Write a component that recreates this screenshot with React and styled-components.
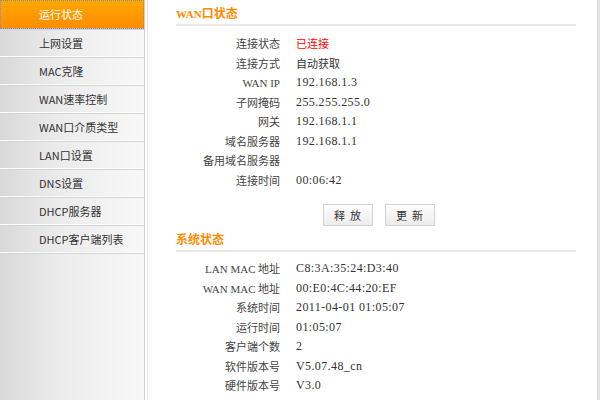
import React from 'react'
import styled, { createGlobalStyle } from 'styled-components'

const GlobalStyle = createGlobalStyle`
  html, body {
    margin: 0;
    padding: 0;
    background: #fff;
  }
  body {
    font-family: "Liberation Serif", "Noto Sans CJK SC", serif;
    font-size: 12px;
    color: #333;
  }
`

const Page = styled.div`
  display: flex;
  width: 600px;
  height: 400px;
  overflow: hidden;
`

const Sidebar = styled.nav`
  width: 144px;
  flex-shrink: 0;
  background: linear-gradient(to right, #d9d9d9, #ebebeb 40%, #f8f8f8);
  border-right: 1px solid #cfcfcf;
  box-shadow: 2px 0 0 #fff, 3px 0 0 #e6e6e6;
`

const MenuItem = styled.div`
  height: ${p => (p.$active ? '28px' : '26px')};
  line-height: ${p => (p.$active ? '28px' : '26px')};
  padding-left: 39px;
  border-bottom: 1px solid ${p => (p.$active ? '#b8b8b8' : '#fdfdfd')};
  box-shadow: 0 1px 0 #d4d4d4;
  font-family: "Noto Sans CJK SC", sans-serif;
  font-size: 11px;
  color: ${p => (p.$active ? '#fff' : '#333')};
  background: ${p =>
    p.$active ? 'linear-gradient(to bottom, #ffa800, #ff8c00)' : 'transparent'};
  outline: ${p => (p.$active ? '1px dotted #8a8aa0' : 'none')};
  outline-offset: -1px;
  margin-bottom: 1px;
`

const Main = styled.main`
  flex: 1;
  padding: 0 21px 0 27px;
  border-right: 3px solid #e2e2e2;
  margin-left: 4px;
`

const Title = styled.h2`
  margin: 0;
  padding-top: ${p => (p.$first ? '5px' : '0')};
  height: 19px;
  line-height: 16px;
  font-family: "Noto Sans CJK SC", sans-serif;
  font-size: 12px;
  font-weight: bold;
  color: #ff8c00;
  border-bottom: 2px solid #e8e8e8;
`

const Rows = styled.div`
  display: grid;
  grid-template-columns: 104px 1fr;
  column-gap: 16px;
  padding-top: ${p => (p.$tight ? '7px' : '8px')};
`

const Label = styled.div`
  text-align: right;
  height: 19.5px;
  line-height: 19.5px;
  font-family: "Noto Sans CJK SC", sans-serif;
  font-size: 11px;
  color: #444;
`

const Value = styled.div`
  height: 19.5px;
  line-height: 19.5px;
  font-family: ${p =>
    p.$cjk ? '"Noto Sans CJK SC", sans-serif' : '"Liberation Serif", "Noto Sans CJK SC", serif'};
  font-size: ${p => (p.$cjk ? '11px' : '12px')};
  color: ${p => (p.$alert ? '#ff0000' : '#333')};
  letter-spacing: ${p => (p.$cjk ? '0' : '0.4px')};
`

const Mono = styled.span`
  font-family: "Liberation Serif", serif;
  font-size: 11px;
`

const Buttons = styled.div`
  display: flex;
  justify-content: center;
  gap: 12px;
  padding: 14px 0 5px 5px;
`

const Button = styled.button`
  width: 50px;
  height: 22px;
  padding: 0;
  border: 1px solid #d4d4d4;
  background: linear-gradient(to bottom, #fdfdfd, #ececec);
  font-family: "Noto Sans CJK SC", sans-serif;
  font-size: 11px;
  color: #333;
  letter-spacing: 5px;
  text-indent: 5px;
`

const menu = [
  '运行状态',
  '上网设置',
  'MAC克隆',
  'WAN速率控制',
  'WAN口介质类型',
  'LAN口设置',
  'DNS设置',
  'DHCP服务器',
  'DHCP客户端列表',
]

const wan = [
  ['连接状态', '已连接', 'alert'],
  ['连接方式', '自动获取', 'cjk'],
  ['WAN IP', '192.168.1.3'],
  ['子网掩码', '255.255.255.0'],
  ['网关', '192.168.1.1'],
  ['域名服务器', '192.168.1.1'],
  ['备用域名服务器', ''],
  ['连接时间', '00:06:42'],
]

const sys = [
  ['LAN MAC 地址', 'C8:3A:35:24:D3:40'],
  ['WAN MAC 地址', '00:E0:4C:44:20:EF'],
  ['系统时间', '2011-04-01 01:05:07'],
  ['运行时间', '01:05:07'],
  ['客户端个数', '2'],
  ['软件版本号', 'V5.07.48_cn'],
  ['硬件版本号', 'V3.0'],
]

const renderLabel = text => {
  const m = text.match(/^([A-Z ]+?)( ?)([^A-Z ]*)$/)
  if (m && m[1].trim()) {
    return (
      <>
        <Mono>{m[1]}</Mono>
        {m[2]}
        {m[3]}
      </>
    )
  }
  return text
}

const InfoRows = ({ rows, tight }) => (
  <Rows $tight={tight}>
    {rows.map(([label, value, kind]) => (
      <React.Fragment key={label}>
        <Label>{renderLabel(label)}</Label>
        <Value $alert={kind === 'alert'} $cjk={kind === 'alert' || kind === 'cjk'}>
          {value}
        </Value>
      </React.Fragment>
    ))}
  </Rows>
)

export default function App() {
  return (
    <Page>
      <GlobalStyle />
      <Sidebar>
        {menu.map((item, i) => (
          <MenuItem key={item} $active={i === 0}>
            {item}
          </MenuItem>
        ))}
      </Sidebar>
      <Main>
        <Title $first>
          <Mono>WAN</Mono>口状态
        </Title>
        <InfoRows rows={wan} />
        <Buttons>
          <Button>释放</Button>
          <Button>更新</Button>
        </Buttons>
        <Title>系统状态</Title>
        <InfoRows rows={sys} tight />
      </Main>
    </Page>
  )
}
